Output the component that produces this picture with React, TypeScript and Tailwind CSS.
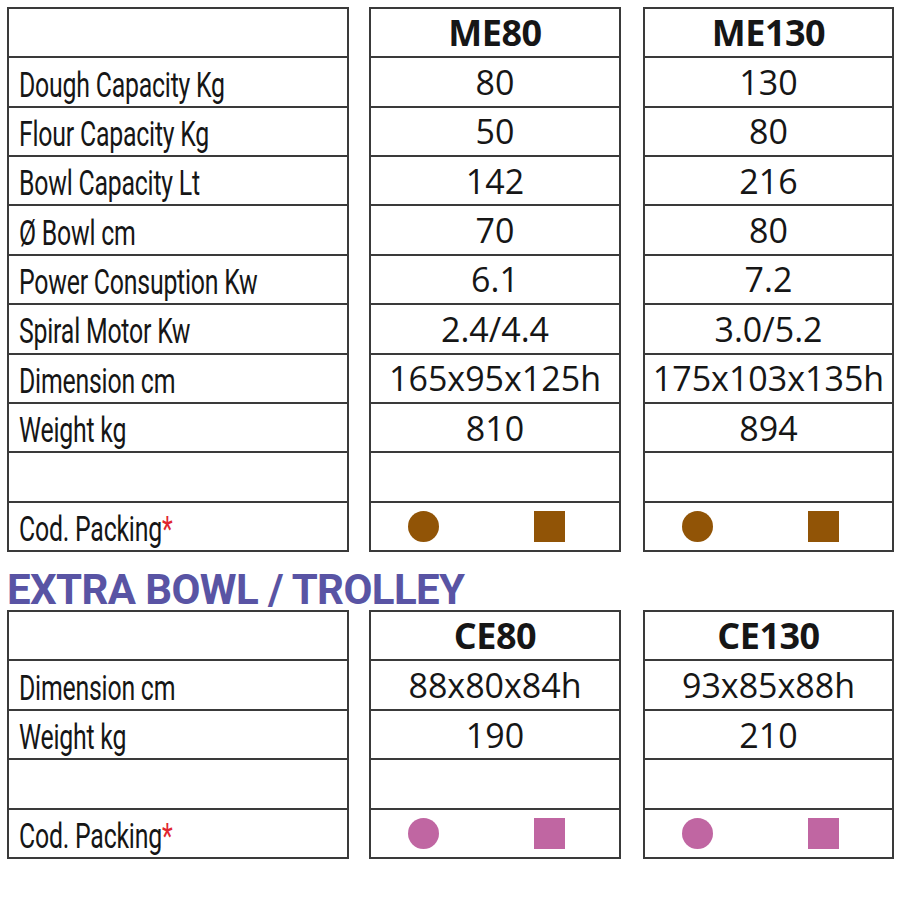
import React from "react";

type Col = { header: string; values: string[] };

const labelsTop = [
  "Dough Capacity Kg",
  "Flour Capacity Kg",
  "Bowl Capacity Lt",
  "Ø Bowl cm",
  "Power Consuption Kw",
  "Spiral Motor Kw",
  "Dimension cm",
  "Weight kg",
];

const colsTop: Col[] = [
  { header: "ME80", values: ["80", "50", "142", "70", "6.1", "2.4/4.4", "165x95x125h", "810"] },
  { header: "ME130", values: ["130", "80", "216", "80", "7.2", "3.0/5.2", "175x103x135h", "894"] },
];

const labelsBottom = ["Dimension cm", "Weight kg"];
const colsBottom: Col[] = [
  { header: "CE80", values: ["88x80x84h", "190"] },
  { header: "CE130", values: ["93x85x88h", "210"] },
];

const Label = ({ children }: { children: React.ReactNode }) => (
  <span
    className="inline-block origin-left translate-y-[3px] scale-x-[0.71] whitespace-nowrap text-[35px] leading-none tracking-[-0.3px] text-[#161616]"
    style={{ fontFamily: "Roboto, 'Liberation Sans', sans-serif" }}
  >
    {children}
  </span>
);

function LabelColumn({ labels, h }: { labels: string[]; h: string }) {
  return (
    <div className={`flex w-[342px] flex-col divide-y-2 divide-[#3a3a3a] border-2 border-[#3a3a3a] ${h}`}>
      <div className="flex-1" />
      {labels.map((l) => (
        <div key={l} className="flex flex-1 items-center overflow-visible pl-[10px]">
          <Label>{l}</Label>
        </div>
      ))}
      <div className="flex-1" />
      <div className="flex flex-1 items-center pl-[10px]">
        <Label>
          Cod. Packing<span className="text-[#e0262f]">*</span>
        </Label>
      </div>
    </div>
  );
}

function ValueColumn({ col, h, w, color }: { col: Col; h: string; w: string; color: string }) {
  return (
    <div
      className={`flex flex-col divide-y-2 divide-[#3a3a3a] border-2 border-[#3a3a3a] ${h} ${w}`}
      style={{ fontFamily: "'Open Sans', sans-serif" }}
    >
      <div className="flex flex-1 items-center justify-center text-[36px] font-bold leading-none tracking-[-0.5px] text-[#161616]">
        {col.header}
      </div>
      {col.values.map((v, i) => (
        <div key={i} className="flex flex-1 items-center justify-center text-[34px] leading-none text-[#161616]">
          {v}
        </div>
      ))}
      <div className="flex-1" />
      <div className="flex flex-1 items-center gap-[95px] pl-[37px]">
        <div className="h-[31px] w-[31px] rounded-full" style={{ backgroundColor: color }} />
        <div className="h-[31px] w-[31px]" style={{ backgroundColor: color }} />
      </div>
    </div>
  );
}

export default function App() {
  return (
    <div className="h-[900px] w-[900px] bg-white pl-[7px] pt-[7px]">
      <div className="flex">
        <LabelColumn labels={labelsTop} h="h-[545px]" />
        <div className="ml-[20px]">
          <ValueColumn col={colsTop[0]} h="h-[545px]" w="w-[252px]" color="#915406" />
        </div>
        <div className="ml-[22px]">
          <ValueColumn col={colsTop[1]} h="h-[545px]" w="w-[251px]" color="#915406" />
        </div>
      </div>
      <div
        className="flex h-[58px] items-center whitespace-nowrap pt-[18px] text-[42px] font-bold leading-none tracking-[-0.6px] text-[#5954a4]"
        style={{ fontFamily: "Roboto, 'Liberation Sans', sans-serif" }}
      >
        EXTRA BOWL / TROLLEY
      </div>
      <div className="flex">
        <LabelColumn labels={labelsBottom} h="h-[249px]" />
        <div className="ml-[20px]">
          <ValueColumn col={colsBottom[0]} h="h-[249px]" w="w-[252px]" color="#c066a2" />
        </div>
        <div className="ml-[22px]">
          <ValueColumn col={colsBottom[1]} h="h-[249px]" w="w-[251px]" color="#c066a2" />
        </div>
      </div>
    </div>
  );
}
